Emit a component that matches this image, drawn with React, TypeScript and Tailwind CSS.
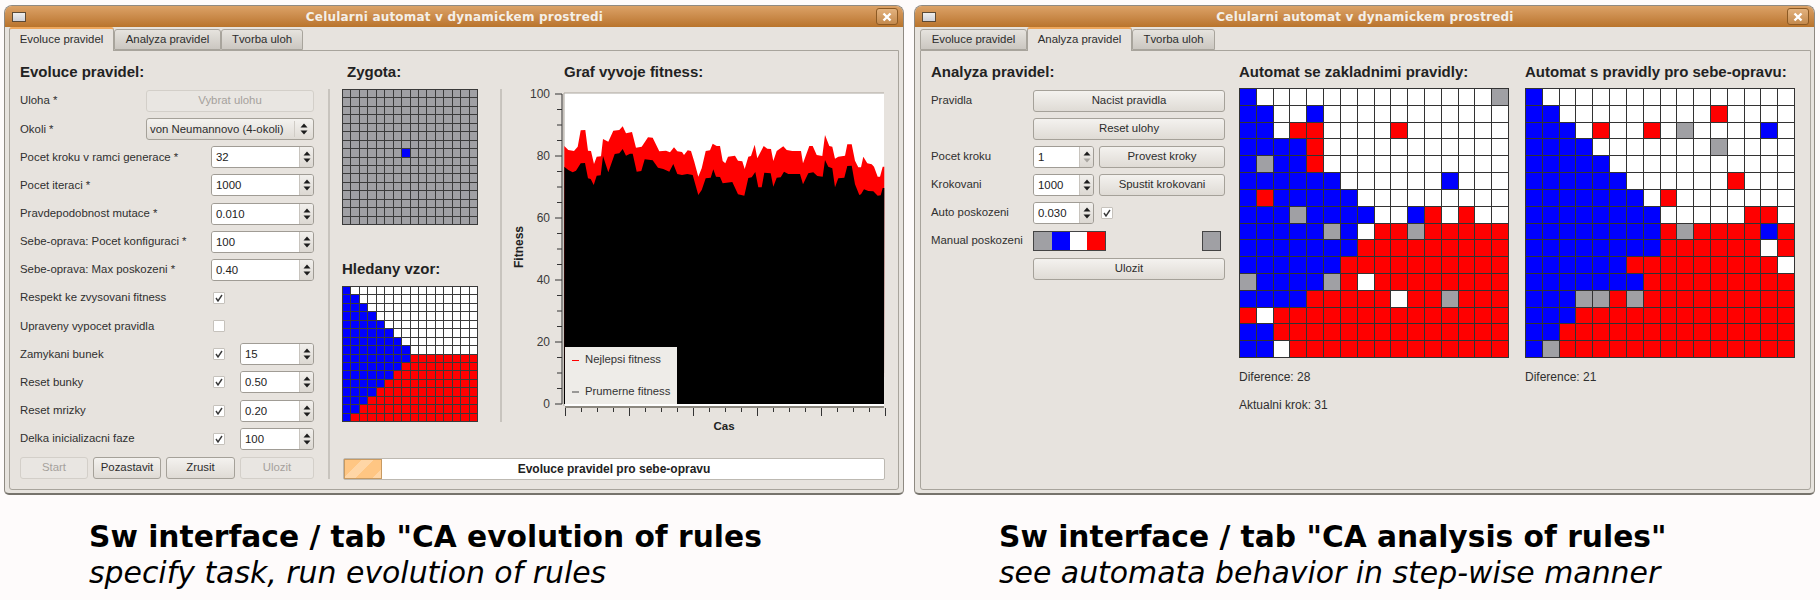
import React from "react";

const ui = "font-['Liberation_Sans',Arial,sans-serif]";
const label = "text-[11.4px] text-[#2f2f2f] whitespace-nowrap";

const cellClass: Record<string, string> = {
  B: "bg-[#0000ff]",
  W: "bg-white",
  R: "bg-[#ff0000]",
  G: "bg-[#a0a0a4]",
};

const zygota = Array.from({ length: 16 }, (_, i) =>
  i === 7 ? "GGGGGGGBGGGGGGGG" : "GGGGGGGGGGGGGGGG"
);
const vzor = [
  "BWWWWWWWWWWWWWWW",
  "BBWWWWWWWWWWWWWW",
  "BBBWWWWWWWWWWWWW",
  "BBBBWWWWWWWWWWWW",
  "BBBBBWWWWWWWWWWW",
  "BBBBBBWWWWWWWWWW",
  "BBBBBBBWWWWWWWWW",
  "BBBBBBBBWWWWWWWW",
  "BBBBBBBBRRRRRRRR",
  "BBBBBBBRRRRRRRRR",
  "BBBBBBRRRRRRRRRR",
  "BBBBBRRRRRRRRRRR",
  "BBBBRRRRRRRRRRRR",
  "BBBRRRRRRRRRRRRR",
  "BBRRRRRRRRRRRRRR",
  "BRRRRRRRRRRRRRRR",
];
const zaklad = [
  "BWWWWWWWWWWWWWWG",
  "BBWWBWWWWWWWWWWW",
  "BBWRRWWWWRWWWWWW",
  "BBBBRWWWWWWWWWWW",
  "BGBBRWWWWWWWWWWW",
  "BBBBBBWWWWWWBWWW",
  "BRBBBBBWWWWWWWWW",
  "BBBGBBBBWWBRWRWW",
  "BBBBBGBWRRGRRRRR",
  "BBBBBBBRRRRRRRRR",
  "BBBBBBRRRRRRRRRR",
  "GBBBBGRWRRRRRRRR",
  "BBBBRRRRRWRRGRRR",
  "RWRRRRRRRRRRRRRR",
  "BBRRRRRRRRRRRRRR",
  "BBWRRRRRRRRRRRRR",
];
const oprava = [
  "BWWWWWWWWWWWWWWW",
  "BBWWWWWWWWWRWWWW",
  "BBBWRWWRWGWWWWBW",
  "BBBBWWWWWWWGWWWW",
  "BBBBBWWWWWWWWWWW",
  "BBBBBBWWWWWWRWWW",
  "BBBBBBBWRWWWWWWW",
  "BBBBBBBBWWWWWRRW",
  "BBBBBBBBRGRRRRBR",
  "BBBBBBBBRRRRRRWR",
  "BBBBBBRRRRRRRRRW",
  "BBBBBBBRRRRRRRRR",
  "BBBGGRGRRRRRRRRR",
  "BBBRRRRRRRRRRRRR",
  "BBRRRRRRRRRRRRRR",
  "BGRRRRRRRRRRRRRR",
];

function CellGrid({ rows, size }: { rows: string[]; size: "sm" | "lg" }) {
  return (
    <div
      className={
        "grid grid-cols-[repeat(16,minmax(0,1fr))] gap-px p-px shrink-0 " +
        (size === "sm" ? "w-[136px] h-[136px] bg-[#3a3a3a]" : "w-[270px] h-[270px] bg-[#333333]")
      }
    >
      {rows.flatMap((r, y) =>
        r.split("").map((c, x) => <div key={y + "-" + x} className={cellClass[c]} />)
      )}
    </div>
  );
}

function Btn({
  children,
  disabled,
  className = "",
}: {
  children: React.ReactNode;
  disabled?: boolean;
  className?: string;
}) {
  return (
    <div
      className={
        "h-[22px] flex items-center justify-center rounded-[3px] border text-[11.4px] whitespace-nowrap " +
        (disabled
          ? "border-[#d3cfc9] bg-[#e9e6e2] text-[#a5a19c] "
          : "border-[#a5a199] bg-gradient-to-b from-[#f4f2ef] to-[#dfdbd5] text-[#2c2c2c] ") +
        className
      }
    >
      {children}
    </div>
  );
}

function Arrows({ downOff }: { downOff?: boolean }) {
  return (
    <svg width="8" height="14" viewBox="0 0 8 14">
      <polygon points="4,1.5 7.5,5.5 0.5,5.5" fill="#1c1c1c" />
      <polygon points="0.5,8.5 7.5,8.5 4,12.5" fill={downOff ? "#a8a5a0" : "#1c1c1c"} />
    </svg>
  );
}

function Spin({ value, className, downOff }: { value: string; className: string; downOff?: boolean }) {
  return (
    <div
      className={
        "h-[22px] flex rounded-[3px] border border-[#a09c95] overflow-hidden shrink-0 " + className
      }
    >
      <div className="flex-1 bg-white pl-[4px] text-[11.4px] leading-[20px] text-[#222]">{value}</div>
      <div className="w-[14px] bg-gradient-to-b from-[#f2f0ed] to-[#dcd8d2] border-l border-[#c8c4be] flex items-center justify-center">
        <Arrows downOff={downOff} />
      </div>
    </div>
  );
}

function Check({ on }: { on: boolean }) {
  return (
    <div className="w-[12px] h-[12px] bg-white border border-[#c6c2bc] rounded-[1px] flex items-center justify-center shrink-0">
      {on && (
        <svg width="8" height="8" viewBox="0 0 8 8">
          <path d="M1 4 L3 7 L7 1" stroke="#3a3a3a" strokeWidth="1.4" fill="none" />
        </svg>
      )}
    </div>
  );
}

function Heading({ children, className = "" }: { children: React.ReactNode; className?: string }) {
  return (
    <div className={"h-[20px] leading-[20px] text-[15px] font-bold text-[#222] whitespace-nowrap " + className}>
      {children}
    </div>
  );
}

function Window({
  active,
  tabWidths,
  outer,
  panelWidth,
  children,
}: {
  active: number;
  tabWidths: string[];
  outer: string;
  panelWidth: string;
  children: React.ReactNode;
}) {
  const names = ["Evoluce pravidel", "Analyza pravidel", "Tvorba uloh"];
  return (
    <div
      className={
        "h-[490px] bg-[#e7e3de] rounded-t-[8px] rounded-b-[5px] border border-[#8f8a82] border-b-[#77736c] border-b-2 flex flex-col overflow-hidden " +
        outer
      }
    >
      <div className="h-[21px] shrink-0 bg-gradient-to-b from-[#dca267] to-[#b9742b] flex items-center relative">
        <div className="ml-[7px] w-[14px] h-[10px] bg-gradient-to-b from-[#eeeeee] to-[#cfd0d6] border border-[#5c4a36]" />
        <div className="flex-1 pl-[7px] text-center text-[12px] font-bold text-[#f4efe8] tracking-[0.2px] font-['DejaVu_Sans',sans-serif]">
          Celularni automat v dynamickem prostredi
        </div>
        <div className="mr-[5px] w-[22px] h-[17px] rounded-[3px] border border-[#8c5a24] bg-gradient-to-b from-[#e3b27e] to-[#c48a4d] flex items-center justify-center">
          <svg width="10" height="10" viewBox="0 0 10 10">
            <path d="M1.5 1.5 L8.5 8.5 M8.5 1.5 L1.5 8.5" stroke="#ffffff" strokeWidth="2.4" />
          </svg>
        </div>
      </div>
      <div className={"flex-1 flex flex-col " + (active === 0 ? "pl-[4px]" : "pl-[5px]")}>
        <div className="h-[23px] flex items-end shrink-0 relative z-10">
          {names.map((n, i) => (
            <div
              key={n}
              className={
                "flex items-center justify-center text-[11.4px] text-[#2c2c2c] rounded-t-[3px] border-x border-[#a8a49c] " +
                tabWidths[i] +
                (i === active
                  ? " h-[24px] -mb-px bg-[#e7e3de] border-t-2 border-t-[#eea75c]"
                  : " h-[21px] border-t border-b bg-gradient-to-b from-[#e6e3de] to-[#cbc7c1]")
              }
            >
              {n}
            </div>
          ))}
        </div>
        <div className={"h-[440px] shrink-0 border border-[#a8a49c] rounded-b-[3px] bg-[#e7e3de] flex " + panelWidth}>
          {children}
        </div>
      </div>
    </div>
  );
}

const bestZ: number[][] = [
  [193,288],[205,300],[222,303],[233,290],[242,241],[256,240],[264,302],[273,303],[282,342],[290,320],[303,319],[309,267],[325,275],[340,242],[358,240],[368,229],[378,250],[396,246],[408,293],[425,290],[444,262],[458,263],[478,304],[498,302],[510,307],[522,292],[532,304],[546,306],[552,315],[563,301],[573,303],[583,335],[595,380],[605,355],[617,303],[630,301],[638,281],[650,288],[660,288],[668,333],[676,340],[684,320],[705,317],[714,332],[727,334],[734,357],[745,320],[753,318],[764,284],[772,325],[791,288],[802,296],[813,297],[820,333],[830,303],[850,289],[860,300],[877,303],[903,303],[909,340],[928,288],[938,288],[950,315],[967,318],[975,255],[988,288],[997,290],[1005,326],[1015,320],[1035,317],[1042,283],[1055,283],[1065,332],[1075,352],[1083,352],[1090,320],[1102,340],[1115,343],[1122,350],[1133,380],[1140,380],[1148,350],[1153,350],
];
const avgZ: number[][] = [
  [193,350],[205,360],[218,367],[228,362],[242,340],[255,339],[264,385],[272,387],[281,405],[290,377],[302,376],[309,318],[325,367],[344,312],[358,310],[368,297],[378,317],[390,311],[398,311],[410,365],[424,363],[434,328],[458,331],[474,353],[490,357],[508,365],[520,342],[532,372],[546,375],[562,372],[578,375],[585,400],[595,435],[605,420],[617,385],[632,383],[640,358],[648,380],[660,381],[668,400],[697,396],[714,433],[733,437],[745,384],[755,382],[766,366],[775,412],[785,412],[793,368],[812,370],[820,410],[830,383],[842,382],[852,365],[865,372],[900,372],[909,403],[925,370],[940,367],[952,378],[968,380],[975,330],[985,350],[997,355],[1005,412],[1015,385],[1033,383],[1042,348],[1055,347],[1065,403],[1078,435],[1083,433],[1092,418],[1105,423],[1120,424],[1133,437],[1142,436],[1148,414],[1153,414],
];
const toPage = (p: number[]) => `${(500 + p[0] / 3).toFixed(1)},${(50 + p[1] / 3).toFixed(1)}`;
const area = (pts: number[][]) => `564,404 ${pts.map(toPage).join(" ")} 884,404`;

function FitnessChart() {
  const yTicks = Array.from({ length: 21 }, (_, i) => i);
  const xTicks = Array.from({ length: 21 }, (_, i) => i);
  const sans = "'Liberation Sans', Arial, sans-serif";
  return (
    <svg width="372" height="346" viewBox="515 89 372 346" className="block mt-[7px] overflow-visible">
      <rect x="564" y="93" width="320" height="313" fill="#ffffff" />
      <path d="M564 406 V93 H884" stroke="#aaa59d" fill="none" />
      <polygon points={area(bestZ)} fill="#ff0000" />
      <polygon points={area(avgZ)} fill="#000000" />
      <line x1="562" y1="94" x2="562" y2="404" stroke="#333" />
      {yTicks.map((i) => {
        const y = 404 - i * 15.5;
        const major = i % 4 === 0;
        return <line key={i} x1={major ? 555 : 557} x2="562" y1={y} y2={y} stroke="#333" />;
      })}
      {[0, 20, 40, 60, 80, 100].map((v) => (
        <text key={v} x="550" y={404 - v * 3.1 + 4} textAnchor="end" fontSize="12" fontFamily={sans} fill="#3a3a3a">
          {v}
        </text>
      ))}
      <rect x="565" y="406" width="319" height="2" fill="#8c8880" />
      {xTicks.map((i) => {
        const x = 565.5 + i * 16;
        const major = i % 4 === 0;
        return <line key={i} x1={x} x2={x} y1="408" y2={major ? 416 : 412} stroke="#333" />;
      })}
      <text x="724" y="430" textAnchor="middle" fontSize="11.5" fontWeight="bold" fontFamily={sans} fill="#222">
        Cas
      </text>
      <text
        x="0"
        y="0"
        transform="translate(523 247) rotate(-90)"
        textAnchor="middle"
        fontSize="12"
        fontWeight="bold"
        fontFamily={sans}
        fill="#222"
      >
        Fitness
      </text>
      <rect x="565" y="347" width="112" height="57" fill="#eeece8" />
      <line x1="572" x2="579" y1="360.5" y2="360.5" stroke="#ff0000" />
      <line x1="572" x2="579" y1="392" y2="392" stroke="#444" />
      <text x="585" y="363" fontSize="11.3" fontFamily={sans} fill="#333">
        Nejlepsi fitness
      </text>
      <text x="585" y="395" fontSize="11.3" fontFamily={sans} fill="#333">
        Prumerne fitness
      </text>
    </svg>
  );
}

function Row({ name, children }: { name: string; children: React.ReactNode }) {
  return (
    <div className="h-[22px] flex items-center">
      <div className={label + " w-[193px] shrink-0"}>{name}</div>
      {children}
    </div>
  );
}

function EvolutionTab() {
  return (
    <>
      <div className="w-[294px] ml-[10px] pt-[11px] shrink-0">
        <Heading>Evoluce pravidel:</Heading>
        <div className="mt-[8px] flex flex-col gap-[6.15px]">
          <div className="h-[22px] flex items-center">
            <div className={label + " w-[126px] shrink-0"}>Uloha *</div>
            <Btn disabled className="w-[168px]">Vybrat ulohu</Btn>
          </div>
          <div className="h-[22px] flex items-center">
            <div className={label + " w-[126px] shrink-0"}>Okoli *</div>
            <div className="w-[168px] h-[22px] rounded-[3px] border border-[#a5a199] bg-gradient-to-b from-[#f4f2ef] to-[#dfdbd5] flex items-center pl-[3px] text-[11.4px] text-[#2c2c2c] whitespace-nowrap">
              <span className="flex-1">von Neumannovo (4-okoli)</span>
              <span className="w-[19px] h-[16px] border-l border-[#d0ccc6] flex items-center justify-center">
                <Arrows />
              </span>
            </div>
          </div>
          <Row name="Pocet kroku v ramci generace *"><Spin value="32" className="w-[103px] -ml-[2px]" /></Row>
          <Row name="Pocet iteraci *"><Spin value="1000" className="w-[103px] -ml-[2px]" /></Row>
          <Row name="Pravdepodobnost mutace *"><Spin value="0.010" className="w-[103px] -ml-[2px]" /></Row>
          <Row name="Sebe-oprava: Pocet konfiguraci *"><Spin value="100" className="w-[103px] -ml-[2px]" /></Row>
          <Row name="Sebe-oprava: Max poskozeni *"><Spin value="0.40" className="w-[103px] -ml-[2px]" /></Row>
          <Row name="Respekt ke zvysovani fitness"><Check on /></Row>
          <Row name="Upraveny vypocet pravidla"><Check on={false} /></Row>
          <Row name="Zamykani bunek"><Check on /><Spin value="15" className="w-[74px] ml-auto" /></Row>
          <Row name="Reset bunky"><Check on /><Spin value="0.50" className="w-[74px] ml-auto" /></Row>
          <Row name="Reset mrizky"><Check on /><Spin value="0.20" className="w-[74px] ml-auto" /></Row>
          <Row name="Delka inicializacni faze"><Check on /><Spin value="100" className="w-[74px] ml-auto" /></Row>
        </div>
        <div className="mt-[7px] flex gap-[5px]">
          <Btn disabled className="w-[68px]">Start</Btn>
          <Btn className="w-[68px]">Pozastavit</Btn>
          <Btn className="w-[69px]">Zrusit</Btn>
          <Btn disabled className="w-[74px]">Ulozit</Btn>
        </div>
      </div>
      <div className="w-[2px] ml-[14px] mt-[38px] h-[390px] bg-[#c8c4be] shrink-0" />
      <div className="ml-[12px] pt-[11px] flex flex-col w-[544px] pb-[9px]">
        <div className="flex">
          <div className="w-[136px] shrink-0">
            <Heading className="pl-[5px]">Zygota:</Heading>
            <div className="mt-[7px]"><CellGrid rows={zygota} size="sm" /></div>
            <Heading className="mt-[34px]">Hledany vzor:</Heading>
            <div className="mt-[7px]"><CellGrid rows={vzor} size="sm" /></div>
          </div>
          <div className="w-[2px] ml-[22px] mt-[27px] h-[333px] bg-[#c8c4be] shrink-0" />
          <div className="ml-[13px]">
            <Heading className="pl-[49px]">Graf vyvoje fitness:</Heading>
            <FitnessChart />
          </div>
        </div>
        <div className="mt-auto ml-px w-[542px] h-[22px] border border-[#bdb9b2] rounded-[2px] bg-white relative flex items-center justify-center">
          <div className="absolute left-0 top-0 bottom-0 w-[38px] border border-[#c79a62] bg-[repeating-linear-gradient(135deg,#ffc683_0px,#ffc683_12px,#ffd6a6_12px,#ffd6a6_20px)]" />
          <span className="text-[12px] font-bold text-[#222]">Evoluce pravidel pro sebe-opravu</span>
        </div>
      </div>
    </>
  );
}

function AnalysisTab() {
  const r = "h-[22px] flex items-center";
  const lab = label + " w-[102px] shrink-0";
  return (
    <>
      <div className="w-[294px] ml-[10px] pt-[11px] shrink-0">
        <Heading>Analyza pravidel:</Heading>
        <div className="mt-[8px] flex flex-col gap-[6px]">
          <div className={r}><div className={lab}>Pravidla</div><Btn className="w-[192px]">Nacist pravidla</Btn></div>
          <div className={r}><div className={lab} /><Btn className="w-[192px]">Reset ulohy</Btn></div>
          <div className={r}>
            <div className={lab}>Pocet kroku</div>
            <Spin value="1" className="w-[61px]" downOff />
            <Btn className="w-[126px] ml-[5px]">Provest kroky</Btn>
          </div>
          <div className={r}>
            <div className={lab}>Krokovani</div>
            <Spin value="1000" className="w-[61px]" />
            <Btn className="w-[126px] ml-[5px]">Spustit krokovani</Btn>
          </div>
          <div className={r}>
            <div className={lab}>Auto poskozeni</div>
            <Spin value="0.030" className="w-[61px]" />
            <div className="ml-[7px]"><Check on /></div>
          </div>
          <div className={r}>
            <div className={lab}>Manual poskozeni</div>
            <div className="w-[73px] h-[20px] flex border border-[#444] shrink-0">
              <div className="flex-1 bg-[#a0a0a4]" />
              <div className="flex-1 bg-[#0000ff]" />
              <div className="flex-1 bg-white" />
              <div className="flex-1 bg-[#ff0000]" />
            </div>
            <div className="ml-[96px] w-[19px] h-[20px] bg-[#a0a0a4] border border-[#444]" />
          </div>
          <div className={r}><div className={lab} /><Btn className="w-[192px]">Ulozit</Btn></div>
        </div>
      </div>
      <div className="ml-[14px] pt-[11px] w-[270px] shrink-0">
        <Heading>Automat se zakladnimi pravidly:</Heading>
        <div className="mt-[6px]"><CellGrid rows={zaklad} size="lg" /></div>
        <div className="mt-[12px] h-[14px] text-[12px] leading-[14px] text-[#2f2f2f]">Diference: 28</div>
        <div className="mt-[14px] h-[14px] text-[12px] leading-[14px] text-[#2f2f2f]">Aktualni krok: 31</div>
      </div>
      <div className="ml-[16px] pt-[11px] w-[270px] shrink-0">
        <Heading>Automat s pravidly pro sebe-opravu:</Heading>
        <div className="mt-[6px]"><CellGrid rows={oprava} size="lg" /></div>
        <div className="mt-[12px] h-[14px] text-[12px] leading-[14px] text-[#2f2f2f]">Diference: 21</div>
      </div>
    </>
  );
}

function Caption({ title, sub, className }: { title: string; sub: string; className: string }) {
  return (
    <div className={"font-['DejaVu_Sans',sans-serif] text-black whitespace-nowrap " + className}>
      <div className="text-[29.7px] font-bold leading-[36px]">{title}</div>
      <div className="text-[29.9px] italic leading-[36px]">{sub}</div>
    </div>
  );
}

export default function App() {
  return (
    <div className={"w-[1820px] h-[600px] bg-[#fefbfb] flex overflow-hidden pt-[5px] " + ui}>
      <div className="ml-[4px] w-[900px] shrink-0">
        <Window active={0} tabWidths={["w-[105px]", "w-[107px]", "w-[82px]"]} outer="w-[900px]" panelWidth="w-[890px]">
          <EvolutionTab />
        </Window>
        <Caption
          className="ml-[85px] mt-[24px]"
          title={'Sw interface / tab "CA evolution of rules'}
          sub="specify task, run evolution of rules"
        />
      </div>
      <div className="ml-[10px] w-[901px] shrink-0">
        <Window active={1} tabWidths={["w-[107px]", "w-[105px]", "w-[83px]"]} outer="w-[901px]" panelWidth="w-[891px]">
          <AnalysisTab />
        </Window>
        <Caption
          className="ml-[85px] mt-[24px]"
          title={'Sw interface / tab "CA analysis of rules"'}
          sub="see automata behavior in step-wise manner"
        />
      </div>
    </div>
  );
}
